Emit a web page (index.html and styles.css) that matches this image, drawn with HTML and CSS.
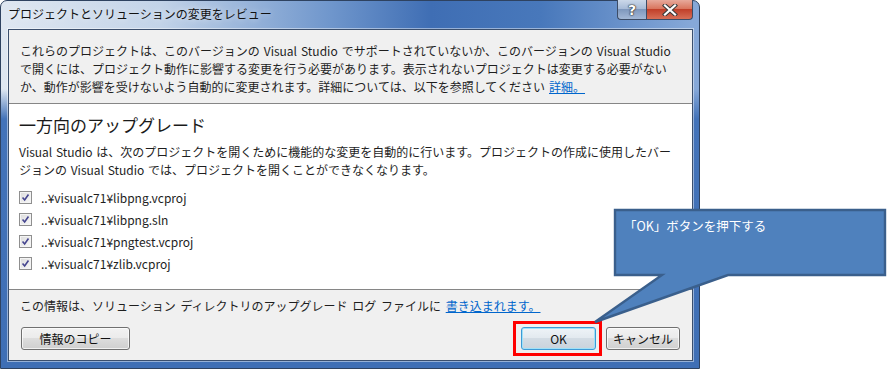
FILE: index.html
```html
<!DOCTYPE html>
<html lang="ja">
<head>
<meta charset="UTF-8">
<title>プロジェクトとソリューションの変更をレビュー</title>
<link rel="stylesheet" href="styles.css">
</head>
<body>
    <div class="window">
        <div class="titlebar">
            <span class="title">プロジェクトとソリューションの変更をレビュー</span>
            <div class="caption-buttons">
                <span class="cap-btn help">?</span>
                <span class="cap-btn close">
                    <svg viewBox="0 0 16 12" width="16" height="12">
                        <path d="M3,1.5 L13,10.5 M13,1.5 L3,10.5" stroke="#3a3a3a" stroke-width="4.2" stroke-linecap="square"/>
                        <path d="M3,1.5 L13,10.5 M13,1.5 L3,10.5" stroke="#fff" stroke-width="2.2" stroke-linecap="square"/>
                    </svg>
                </span>
            </div>
        </div>

        <div class="client">
            <div class="info">
                これらのプロジェクトは、このバージョンの Visual Studio でサポートされていないか、このバージョンの Visual Studio<br>
                で開くには、プロジェクト動作に影響する変更を行う必要があります。表示されないプロジェクトは変更する必要がない<br>
                か、動作が影響を受けないよう自動的に変更されます。詳細については、以下を参照してください <a href="#" class="link">詳細。</a>
            </div>

            <div class="upgrade">
                <h2>一方向のアップグレード</h2>
                <p>Visual Studio は、次のプロジェクトを開くために機能的な変更を自動的に行います。プロジェクトの作成に使用したバー<br>ジョンの Visual Studio では、プロジェクトを開くことができなくなります。</p>
                <ul class="files">
                    <li><span class="check"><svg viewBox="0 0 13 13"><path d="M3,6.5 L5.5,9.5 L10,3" /></svg></span>..¥visualc71¥libpng.vcproj</li>
                    <li><span class="check"><svg viewBox="0 0 13 13"><path d="M3,6.5 L5.5,9.5 L10,3" /></svg></span>..¥visualc71¥libpng.sln</li>
                    <li><span class="check"><svg viewBox="0 0 13 13"><path d="M3,6.5 L5.5,9.5 L10,3" /></svg></span>..¥visualc71¥pngtest.vcproj</li>
                    <li><span class="check"><svg viewBox="0 0 13 13"><path d="M3,6.5 L5.5,9.5 L10,3" /></svg></span>..¥visualc71¥zlib.vcproj</li>
                </ul>
            </div>

            <div class="footer">
                <p>この情報は、ソリューション ディレクトリのアップグレード ログ ファイルに <a href="#" class="link">書き込まれます。</a></p>
                <div class="button-row">
                    <button class="btn copy">情報のコピー</button>
                    <div class="actions">
                        <button class="btn ok">OK</button>
                        <button class="btn cancel">キャンセル</button>
                    </div>
                </div>
            </div>
        </div>
    </div>

    <!-- annotation overlay -->
    <div class="highlight"></div>
    <svg class="callout" viewBox="0 0 887 370" width="887" height="370">
        <path d="M615,210 H885 V275 H728 L595,322 L662,275 H615 Z" fill="#4f81bd" stroke="#3a5f8c" stroke-width="2.4" stroke-linejoin="miter"/>
    </svg>
    <div class="callout-text">「OK」ボタンを押下する</div>
</body>
</html>
```

FILE: styles.css
```css
*{margin:0;padding:0;box-sizing:border-box}

body{
    position:relative;
    width:887px;
    height:370px;
    overflow:hidden;
    background:#fff;
    font-family:"Noto Sans CJK JP","Noto Sans",sans-serif;
    font-size:12px;
    color:#1e1e1e;
}

/* window frame ---------- */
.window{
    width:700px;
    height:369px;
    display:flex;
    flex-direction:column;
    padding:0 6px 7px 7px;
    border:1px solid #2e4260;
    border-radius:7px 7px 0 0;
    background:
        linear-gradient(to bottom,rgba(66,114,184,0) 0,rgba(66,114,184,0) 88px,#4373b9 118px,#3f6fb5 100%),
        linear-gradient(90deg,#dfe7f1 0,#c2d3e8 160px,#6f96cc 330px,#3f6eb4 430px,#4878bb 540px,#86a8d8 690px);
}

.titlebar{
    height:28px;
    display:flex;
    align-items:flex-start;
}
.title{
    padding-top:4px;
    font-size:12px;
    line-height:17px;
    color:#111;
    text-shadow:0 0 6px rgba(255,255,255,.8);
}
.caption-buttons{
    margin-left:auto;
    margin-top:-1px;
    display:flex;
}
.cap-btn{
    height:20px;
    display:flex;
    align-items:center;
    justify-content:center;
    border:1px solid #3c4c66;
    border-top:none;
}
.cap-btn.help{
    width:29px;
    border-radius:0 0 0 4px;
    border-right:none;
    background:linear-gradient(#cbd8e9 0,#a8bcd8 45%,#7f98bd 50%,#a3b8d6 100%);
    font-family:"DejaVu Sans",sans-serif;
    font-weight:bold;
    font-size:14px;
    color:#fff;
    text-shadow:0 0 1px #222,0 0 1px #222,0 0 2px #333;
}
.cap-btn.close{
    width:47px;
    border-radius:0 0 4px 0;
    background:linear-gradient(#e7a99b 0,#d9765f 45%,#c1402a 50%,#d76f57 100%);
}

.client{
    flex:1;
    display:flex;
    flex-direction:column;
    border:1px solid #3b4f6d;
    box-shadow:0 0 0 1px rgba(255,255,255,.45);
    background:#f0f0f0;
}

/* info ------------------ */
.info{
    height:73px;
    padding:12px 11px 0;
    line-height:18px;
    white-space:nowrap;
    word-spacing:1.3px;
}
.link{
    color:#0066cc;
    text-decoration:underline;
}

/* upgrade --------------- */
.upgrade{
    height:187px;
    padding:10px 10px 0;
    background:#fff;
    border-top:1px solid #868686;
    border-bottom:1px solid #868686;
}
.upgrade h2{
    font-size:17px;
    font-weight:400;
    line-height:22px;
    color:#1a1a1a;
}
.upgrade p{
    margin-top:7px;
    line-height:18px;
    white-space:nowrap;
    word-spacing:1px;
}
.files{
    list-style:none;
    margin-top:7px;
}
.files li{
    height:22px;
    display:flex;
    align-items:center;
    gap:9px;
}
.check{
    width:13px;
    height:13px;
    border:1px solid #8f8f8f;
    background:linear-gradient(135deg,#dcdcdc,#f8f8f8);
    box-shadow:inset 0 0 0 1px #f4f4f4;
    display:flex;
}
.check svg{
    width:11px;
    height:11px;
    fill:none;
    stroke:#45458f;
    stroke-width:1.9;
}

/* footer ---------------- */
.footer{
    flex:1;
    padding:7px 12px 0 11px;
}
.footer p{
    line-height:18px;
    word-spacing:2px;
}
.button-row{
    margin-top:12px;
    padding-left:1px;
    display:flex;
    justify-content:space-between;
}
.actions{
    display:flex;
    gap:10px;
}
.btn{
    height:23px;
    font-family:inherit;
    font-size:12px;
    color:#111;
    border:1px solid #707070;
    border-radius:3px;
    background:linear-gradient(#f2f2f2 0,#ebebeb 49%,#dddddd 50%,#cfcfcf 100%);
    box-shadow:inset 0 0 0 1px rgba(255,255,255,.7);
}
.btn.copy{width:109px}
.btn.ok{
    width:75px;
    border-color:#3c9ad6;
    background:linear-gradient(#eef3f7 0,#e2e9ef 49%,#d3dce4 50%,#c9d3dc 100%);
    box-shadow:inset 0 0 0 1px #9fe1f8;
}
.btn.cancel{width:74px}

/* annotation ------------ */
.highlight{
    position:absolute;
    left:513px;
    top:321px;
    width:89px;
    height:35px;
    border:3px solid #ff0000;
}
.callout{
    position:absolute;
    left:0;
    top:0;
    pointer-events:none;
}
.callout-text{
    position:absolute;
    left:624px;
    top:217px;
    font-size:12.5px;
    line-height:17px;
    color:#fff;
}
```
